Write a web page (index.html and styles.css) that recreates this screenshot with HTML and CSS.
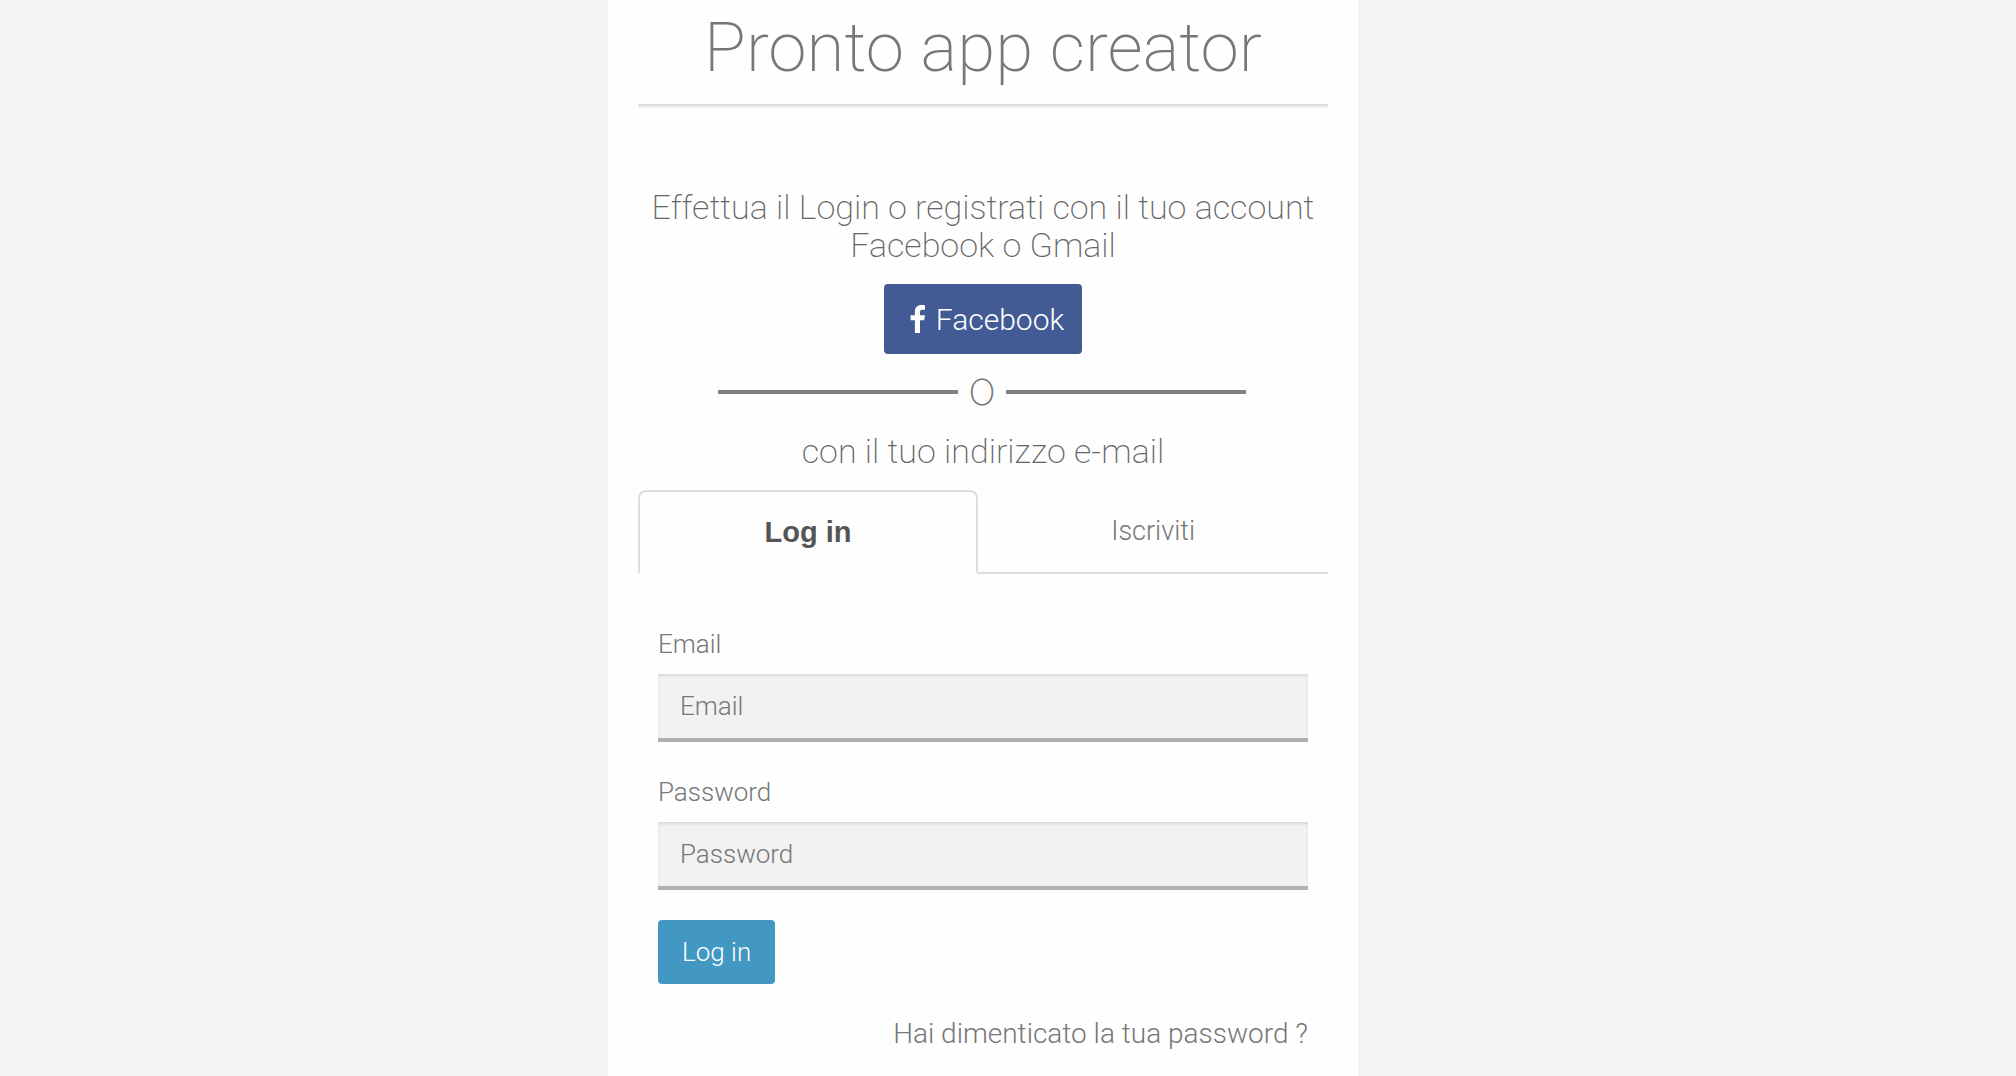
FILE: index.html
```
<!DOCTYPE html>
<html lang="it">
<head>
  <meta charset="UTF-8" />
  <meta name="viewport" content="width=device-width, initial-scale=1.0"/>
  <title>Pronto app creator</title>
  <link rel="stylesheet" href="styles.css">
</head>
<body>

  <main class="login-box">
    <h1>Pronto app creator</h1>
    <hr class="title-line">

    <h2 class="intro">Effettua il Login o registrati con il tuo account Facebook o Gmail</h2>

    <!-- Social login -->
    <button type="button" class="btn btn-facebook">
      <svg class="icon-facebook" viewBox="0 0 16 28" aria-hidden="true">
        <path d="M15 .3v4.400h-2.600c-2 0-2.400 1-2.400 2.400v3.100h4.900l-.7 5H10V28H4.900V15.200H.6v-5h4.300V6.500C4.900 2.300 7.500 0 11.200 0c1.800 0 3.300.1 3.800.3z"/>
      </svg>
      <span>Facebook</span>
    </button>

    <div class="divider"><span>O</span></div>

    <h2>con il tuo indirizzo e-mail</h2>

    <!-- Tabs -->
    <div class="tabs" role="tablist">
      <button type="button" class="tab active" role="tab" aria-selected="true">Log in</button>
      <button type="button" class="tab" role="tab" aria-selected="false">Iscriviti</button>
    </div>

    <form class="login-form" onsubmit="return false">
      <label for="email">Email</label>
      <input type="email" id="email" placeholder="Email">

      <label for="password">Password</label>
      <input type="password" id="password" placeholder="Password">

      <button type="submit" class="btn btn-login">Log in</button>

      <a href="#" class="forgot">Hai dimenticato la tua password ?</a>
    </form>
  </main>

</body>
</html>
```
FILE: styles.css
```
* {
  box-sizing: border-box;
}

body {
  margin: 0;
  padding-right: 50px;
  background: #f3f3f3;
  color: #777;
  font-family: Roboto, "Liberation Sans", sans-serif;
  font-weight: 300;
}

button,
input {
  font: inherit;
  color: inherit;
}

.login-box {
  display: flex;
  flex-direction: column;
  max-width: 750px;
  min-height: 100vh;
  margin: 0 auto;
  padding: 0 30px;
  background: #fefefe;
  text-align: center;
}

h1 {
  margin: 0;
  padding: 8px 0 16px;
  font-size: 69px;
  font-weight: 200;
  line-height: 80px;
}

h2 {
  margin: 0;
  color: #666;
  font-size: 34px;
  font-weight: 200;
  line-height: 38px;
}

.title-line {
  width: 100%;
  margin: 0;
  border: solid #ddd;
  border-width: 2px 0;
  border-bottom-color: #eee;
}

.intro {
  padding: 80px 0 20px;
}

.btn {
  border: none;
  border-radius: 4px;
  color: white;
  cursor: pointer;
}

.btn-facebook {
  display: flex;
  align-items: center;
  align-self: center;
  gap: 10px;
  height: 70px;
  padding: 0 18px 0 26px;
  background: #425b94;
  font-size: 30px;
}

.icon-facebook {
  width: 16px;
  height: 28px;
  fill: white;
}

.divider {
  display: flex;
  align-items: center;
  gap: 10px;
  padding: 14px 82px 16px 80px;
  font-family: Inter, "Liberation Sans", sans-serif;
  font-size: 36px;
  font-weight: 200;
  line-height: 48px;
}

.divider::before,
.divider::after {
  content: "";
  flex: 1;
  height: 4px;
  background: #808080;
}

.tabs {
  display: flex;
  margin-top: 20px;
}

.tab {
  flex: 1;
  height: 84px;
  padding: 0;
  border: none;
  border-bottom: 2px solid #ddd;
  background: none;
  font-size: 27px;
  cursor: pointer;
}

.tab.active {
  flex: 0 0 49.3%;
  border: 2px solid #ddd;
  border-bottom-color: transparent;
  border-radius: 8px 8px 0 0;
  color: #555;
  font-family: "Liberation Sans", sans-serif;
  font-size: 29px;
  font-weight: bold;
}

.login-form {
  display: flex;
  flex-direction: column;
  padding: 50px 20px 0;
  text-align: left;
}

.login-form label {
  font-size: 26px;
  line-height: 40px;
  margin-bottom: 10px;
}

.login-form input {
  width: 100%;
  height: 68px;
  margin-bottom: 30px;
  padding: 0 22px;
  border: none;
  border-bottom: 4px solid #b0b0b0;
  border-radius: 0;
  background: #f2f2f2;
  box-shadow: inset 0 2px 3px #d8d8d8;
  font-size: 26px;
}

.login-form input::placeholder {
  color: #777;
  opacity: 1;
}

.btn-login {
  align-self: flex-start;
  height: 64px;
  padding: 0 24px;
  background: #4297c3;
  font-size: 26px;
}

.forgot {
  align-self: flex-end;
  margin-top: 30px;
  color: inherit;
  font-size: 28px;
  line-height: 40px;
  text-decoration: none;
}
```
